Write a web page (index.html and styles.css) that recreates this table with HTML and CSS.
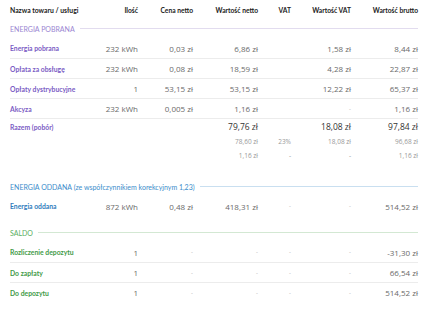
FILE: index.html
```html
<!DOCTYPE html>
<html lang="pl">
<head>
    <meta charset="UTF-8">
    <title>Rozliczenie</title>
    <link rel="stylesheet" href="styles.css">
</head>
<body>
    <div class="invoice">
        <div class="row head">
            <div class="name">Nazwa towaru / usługi</div>
            <div>Ilość</div>
            <div>Cena netto</div>
            <div>Wartość netto</div>
            <div>VAT</div>
            <div>Wartość VAT</div>
            <div>Wartość brutto</div>
        </div>

        <!-- energia pobrana -->
        <div class="group purple">
            <div class="section"><span>ENERGIA POBRANA</span></div>
            <div class="row item">
                <div class="name">Energia pobrana</div>
                <div>232 kWh</div><div>0,03 zł</div><div>6,86 zł</div><div></div><div>1,58 zł</div><div>8,44 zł</div>
            </div>
            <div class="row item">
                <div class="name">Opłata za obsługę</div>
                <div>232 kWh</div><div>0,08 zł</div><div>18,59 zł</div><div></div><div>4,28 zł</div><div>22,87 zł</div>
            </div>
            <div class="row item">
                <div class="name">Opłaty dystrybucyjne</div>
                <div>1</div><div>53,15 zł</div><div>53,15 zł</div><div></div><div>12,22 zł</div><div>65,37 zł</div>
            </div>
            <div class="row item">
                <div class="name">Akcyza</div>
                <div>232 kWh</div><div>0,005 zł</div><div>1,16 zł</div><div></div><div class="dash">-</div><div>1,16 zł</div>
            </div>
            <div class="row item total">
                <div class="name">Razem (pobór)</div>
                <div></div><div></div><div>79,76 zł</div><div></div><div>18,08 zł</div><div>97,84 zł</div>
            </div>
            <div class="row sub">
                <div></div><div></div><div></div><div>78,60 zł</div><div>23%</div><div>18,08 zł</div><div>96,68 zł</div>
            </div>
            <div class="row sub">
                <div></div><div></div><div></div><div>1,16 zł</div><div>-</div><div>-</div><div>1,16 zł</div>
            </div>
        </div>

        <!-- energia oddana -->
        <div class="group blue">
            <div class="section"><span>ENERGIA ODDANA (ze współczynnikiem korekcyjnym 1,23)</span></div>
            <div class="row item">
                <div class="name">Energia oddana</div>
                <div>872 kWh</div><div>0,48 zł</div><div>418,31 zł</div><div class="dash">-</div><div class="dash">-</div><div>514,52 zł</div>
            </div>
        </div>

        <!-- saldo -->
        <div class="group green">
            <div class="section"><span>SALDO</span></div>
            <div class="row item">
                <div class="name">Rozliczenie depozytu</div>
                <div>1</div><div class="dash">-</div><div class="dash">-</div><div class="dash">-</div><div class="dash">-</div><div>-31,30 zł</div>
            </div>
            <div class="row item">
                <div class="name">Do zapłaty</div>
                <div>1</div><div class="dash">-</div><div class="dash">-</div><div class="dash">-</div><div class="dash">-</div><div>66,54 zł</div>
            </div>
            <div class="row item">
                <div class="name">Do depozytu</div>
                <div>1</div><div class="dash">-</div><div class="dash">-</div><div class="dash">-</div><div class="dash">-</div><div>514,52 zł</div>
            </div>
        </div>
    </div>
</body>
</html>
```

FILE: styles.css
```css
body {
    margin: 0;
    background: #fff;
    font-family: 'Open Sans', sans-serif;
}

.invoice {
    padding: 0 14px 0 10px;
}

.row {
    display: grid;
    grid-template-columns: 78px 50px 55px 65px 33px 60px 67px;
    align-items: center;
    text-align: right;
}

.row .name {
    text-align: left;
    font-family: 'Lato', sans-serif;
    font-weight: 700;
    font-size: 6.8px;
    white-space: nowrap;
}

.head {
    height: 19px;
    font-family: 'Lato', sans-serif;
    font-weight: 700;
    font-size: 6.7px;
    color: #222;
}

.section {
    height: 19px;
    display: flex;
    align-items: center;
    font-family: 'Lato', sans-serif;
    font-size: 7px;
}

.section::after {
    content: "";
    flex: 1;
    height: 1px;
    margin-left: 5px;
    background: var(--line);
}

.item {
    height: 20px;
    font-size: 8px;
    color: #6a6a6a;
}

.item + .item {
    border-top: 1px solid #ececec;
    height: 19px;
}

.item .dash {
    color: #aaa;
    font-size: 6px;
}

.item.total {
    height: 15px;
    color: #333;
    font-size: 8.5px;
}

.sub {
    height: 14px;
    font-size: 6.5px;
    color: #999;
}

.group.purple {
    --line: #e2dcef;
    padding-bottom: 15px;
}

.group.purple .section { color: #9b86d2; }
.group.purple .name { color: #7a5bc4; }

.group.blue {
    --line: #c9dff0;
    padding-bottom: 7px;
}

.group.blue .section { color: #3a8dcb; }
.group.blue .name { color: #2f7cbc; }

.group.green {
    --line: #d3e8d3;
}

.group.green .section { color: #5aae5f; }
.group.green .name { color: #3f9a47; }
```
